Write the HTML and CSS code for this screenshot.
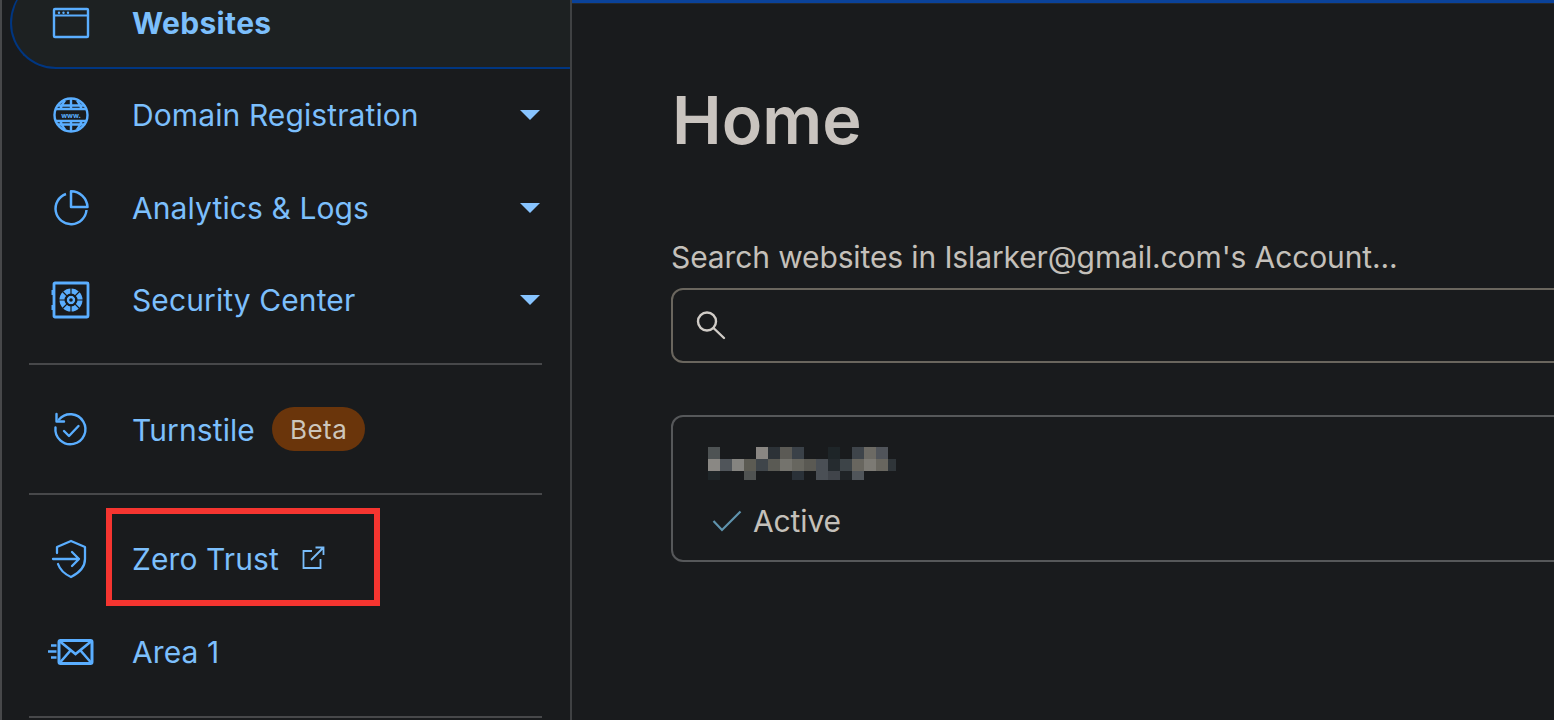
FILE: index.html
```html
<!DOCTYPE html>
<html lang="en">
<head>
<meta charset="utf-8">
<title>Home</title>
<link rel="stylesheet" href="styles.css">
</head>
<body>
<div class="page">
  <aside class="sidebar">
    <nav class="section first">
      <a class="row active">
        <svg class="icon" viewBox="0 0 40 40"><rect x="3" y="6" width="34" height="28" rx="1" fill="none" stroke="#5aaeff" stroke-width="2.400"/><path d="M3 12.500H37" stroke="#5aaeff" stroke-width="2"/><circle cx="8" cy="9.700" r="1.200" fill="#5aaeff"/><circle cx="12.500" cy="9.700" r="1.200" fill="#5aaeff"/><circle cx="17" cy="9.700" r="1.200" fill="#5aaeff"/></svg>
        <span class="label">Websites</span>
      </a>
      <a class="row">
        <svg class="icon" viewBox="0 0 40 40"><g fill="none" stroke="#5aaeff" stroke-width="2.400"><circle cx="20" cy="20" r="16.500"/><path d="M20 3.500V14M20 26V36.500M6 10.500H34M6 29.500H34M14 5.500C11 9 10 11.500 9.500 14M26 5.500C29 9 30 11.500 30.500 14M14 34.500C11 31 10 28.500 9.500 26M26 34.500C29 31 30 28.500 30.500 26"/><path d="M4 14H36M4 26H36"/></g><text x="20" y="22.500" class="www">www.</text></svg>
        <span class="label">Domain Registration</span><span class="caret"></span>
      </a>
      <a class="row">
        <svg class="icon" viewBox="0 0 40 40"><g fill="none" stroke="#5aaeff" stroke-width="2.500" stroke-linejoin="round"><path d="M15 6A15.500 15.500 0 1 0 35.500 22"/><path d="M20 3.200V19H36.500A16.500 16.500 0 0 0 20 3.200Z"/></g></svg>
        <span class="label">Analytics &amp; Logs</span><span class="caret"></span>
      </a>
      <a class="row">
        <svg class="icon" viewBox="0 0 40 40"><g fill="none" stroke="#5aaeff"><rect x="3" y="3" width="34" height="34" rx="1" stroke-width="2.800"/><path d="M1.500 10V15M1.500 25V30" stroke-width="2"/><circle cx="20" cy="20" r="9" stroke-width="5"/><circle cx="20" cy="20" r="3" stroke-width="2.400"/></g><g stroke="#191b1d" stroke-width="1.200"><path d="M20 8V16M20 24V32M8 20H16M24 20H32M11.500 11.500L17 17M23 23L28.500 28.500M28.500 11.500L23 17M17 23L11.500 28.500"/></g></svg>
        <span class="label">Security Center</span><span class="caret"></span>
      </a>
    </nav>
    <nav class="section second">
      <a class="row">
        <svg class="icon" viewBox="0 0 40 40"><g fill="none" stroke="#5aaeff" stroke-width="2.400" stroke-linecap="round" stroke-linejoin="round"><path d="M8 9.500A15 15 0 1 1 4.500 17.500"/><path d="M5.500 4V11.500H13"/><path d="M13 21L18 26L27.500 16"/></g></svg>
        <span class="label">Turnstile</span><span class="badge">Beta</span>
      </a>
    </nav>
    <nav class="section third">
      <a class="row">
        <svg class="icon" viewBox="0 0 40 40"><g fill="none" stroke="#5aaeff" stroke-width="2.300" stroke-linecap="round" stroke-linejoin="round"><path d="M6 14V8L20 2L34 8V20C34 28 28 34 20 38C13.500 35 9 31 7 25"/><path d="M2 20H28M21 13L28 20L21 27"/></g></svg>
        <span class="label">Zero Trust</span>
        <svg class="ext" viewBox="0 0 24 24"><g fill="none" stroke="#79bdfb" stroke-width="1.800"><path d="M11 5H2.500V22H19.500V13"/><path d="M10 14L22.500 1.500M14.500 1.500H22.500V9"/></g></svg>
        <span class="callout"></span>
      </a>
      <a class="row">
        <svg class="icon wide" viewBox="0 0 46 26"><rect x="11" y="1.500" width="33" height="23" rx="1.500" fill="none" stroke="#5aaeff" stroke-width="3"/><path d="M12 2.500L27.500 15L43 2.500M12 23.500L22.500 11.500M43 23.500L32.500 11.500" fill="none" stroke="#5aaeff" stroke-width="2.600"/><path d="M3 6.500H8.500M0 12.500H8.500M3 18.500H8.500" stroke="#5aaeff" stroke-width="2.400"/></svg>
        <span class="label">Area 1</span>
      </a>
    </nav>
  </aside>
  <main class="main">
    <h1 class="title">Home</h1>
    <label class="search-label" for="q">Search websites in Islarker@gmail.com's Account...</label>
    <div class="search">
      <svg class="search-icon" viewBox="0 0 32 32"><circle cx="11" cy="11.500" r="9" fill="none" stroke="#d0ccc7" stroke-width="2.400"/><path d="M17.500 18L28 28" stroke="#d0ccc7" stroke-width="2.400" stroke-linecap="round"/></svg>
      <input id="q" class="search-input" type="text">
    </div>
    <section class="card">
      <svg class="blur" viewBox="0 0 188 33" width="188" height="33" shape-rendering="crispEdges" aria-hidden="true">
        <g>
          <rect x="0" y="0" width="12" height="12" fill="#4e5354"/><rect x="48" y="0" width="12" height="12" fill="#8a8783"/><rect x="60" y="0" width="12" height="12" fill="#2c3237"/><rect x="72" y="0" width="12" height="12" fill="#5b5a55"/><rect x="84" y="0" width="12" height="12" fill="#3a4148"/><rect x="120" y="0" width="12" height="12" fill="#1e2528"/><rect x="144" y="0" width="12" height="12" fill="#3e444a"/><rect x="156" y="0" width="12" height="12" fill="#6c6a64"/><rect x="168" y="0" width="12" height="12" fill="#50545a"/>
          <rect x="0" y="12" width="12" height="12" fill="#8a8884"/><rect x="12" y="12" width="12" height="12" fill="#50555a"/><rect x="24" y="12" width="12" height="12" fill="#858480"/><rect x="36" y="12" width="12" height="12" fill="#5c5b53"/><rect x="48" y="12" width="12" height="12" fill="#3f454a"/><rect x="60" y="12" width="12" height="12" fill="#5a5a54"/><rect x="72" y="12" width="12" height="12" fill="#74736d"/><rect x="84" y="12" width="12" height="12" fill="#67665f"/><rect x="96" y="12" width="12" height="12" fill="#5a5953"/><rect x="108" y="12" width="12" height="12" fill="#4a4f55"/><rect x="120" y="12" width="12" height="12" fill="#252b2f"/><rect x="132" y="12" width="12" height="12" fill="#3d4448"/><rect x="144" y="12" width="12" height="12" fill="#68665f"/><rect x="156" y="12" width="12" height="12" fill="#7c7a74"/><rect x="168" y="12" width="12" height="12" fill="#68665f"/><rect x="180" y="12" width="8" height="12" fill="#2f3539"/>
          <rect x="0" y="24" width="12" height="9" fill="#1e2528"/><rect x="36" y="24" width="12" height="9" fill="#505352"/><rect x="84" y="24" width="12" height="9" fill="#2a3138"/><rect x="108" y="24" width="12" height="9" fill="#4a4f55"/><rect x="120" y="24" width="12" height="9" fill="#40444a"/><rect x="132" y="24" width="12" height="9" fill="#1f2326"/><rect x="144" y="24" width="12" height="9" fill="#50555a"/>
        </g>
      </svg>
      <div class="status">
        <svg class="check" viewBox="0 0 30 22"><path d="M1.500 11L10 20L28.500 1.500" fill="none" stroke="#5f93ad" stroke-width="2.200"/></svg>
        <span>Active</span>
      </div>
    </section>
  </main>
</div>
</body>
</html>
```

FILE: styles.css
```css
* { box-sizing: border-box; }
html, body { margin: 0; height: 100%; overflow: hidden; }
body { background: #191b1d; font-family: Inter, "Liberation Sans", sans-serif; }
.page { display: flex; width: 1554px; height: 720px; overflow: hidden; }

.sidebar { flex: 0 0 572px; height: 720px; border-left: 2px solid #47484a; border-right: 2px solid #3f4143; }
.section { padding: 19px 0 17px; position: relative; }
.section::after { content: ""; position: absolute; left: 27px; right: 28px; bottom: 0; height: 2px; transform: translateY(2px); background: #47484a; }
.section.first { padding-top: 0; margin-top: -23px; }
.section + .section { margin-top: 2px; }
.section.second { padding-bottom: 16px; }
.section.third { padding-top: 18px; }
.section.third .row { height: 93px; }

.row { display: flex; align-items: center; height: 92.33px; padding-left: 49px; color: #7cbffc; font-size: 30px; letter-spacing: .1px; position: relative; }
.row.active { margin-left: 8px; padding-left: 39px; padding-top: 2px; background: #1d2122; border-bottom: 2px solid #003681; border-left: 2px solid #003681; border-radius: 46px 0 0 46px; font-weight: 700; letter-spacing: .35px; }
.icon { flex: 0 0 40px; width: 40px; height: 40px; margin-right: 41px; }
.icon.wide { flex: 0 0 46px; width: 46px; height: 26px; margin-left: -3px; margin-right: 38px; }
.www { font: 700 7px Inter, "Liberation Sans", sans-serif; fill: #5aaeff; text-anchor: middle; stroke: none; letter-spacing: 0; }
.label { white-space: nowrap; }
.caret { position: absolute; right: 30px; top: 41px; width: 0; height: 0; border-left: 10px solid transparent; border-right: 10px solid transparent; border-top: 10px solid #87c4ff; }
.badge { margin: -2px 0 0 17px; height: 44px; padding: 0 18px; display: flex; align-items: center; border-radius: 22px; background: #6a350b; color: #cdc6bc; font-size: 26px; letter-spacing: .5px; }
.ext { width: 24px; height: 24px; margin-left: 22px; margin-top: -3px; }
.callout { position: absolute; left: 104px; top: -5px; width: 274px; height: 98px; border: 6px solid #f53530; pointer-events: none; }

.main { flex: 1; min-width: 0; border-top: 3px solid #0a4299; padding: 0 0 0 99px; box-shadow: inset 0 1px 0 #26292c; }
.title { margin: 77px 0 0 1px; color: #c9c4bf; font-size: 66.6px; line-height: 80px; font-weight: 600; }
.search-label { display: block; margin-top: 77px; color: #c4c0ba; font-size: 30px; letter-spacing: -.12px; line-height: 40px; white-space: nowrap; }
.search { display: flex; align-items: center; margin: 11px 0 0; width: 1000px; height: 75px; padding-left: 23px; border: 2px solid #6a665e; border-radius: 12px; }
.search-icon { width: 32px; height: 32px; flex: none; }
.search-input { flex: 1; background: none; border: 0; outline: 0; height: 100%; }
.card { margin-top: 52px; width: 1000px; height: 147px; padding: 30px 0 0 35px; border: 2px solid #56585a; border-radius: 12px; }
.blur { display: block; }
.status { display: flex; align-items: center; margin: 21px 0 0 4px; color: #c4c0ba; font-size: 30px; letter-spacing: -.12px; line-height: 40px; }
.check { width: 30px; height: 22px; margin-right: 11px; }
```
